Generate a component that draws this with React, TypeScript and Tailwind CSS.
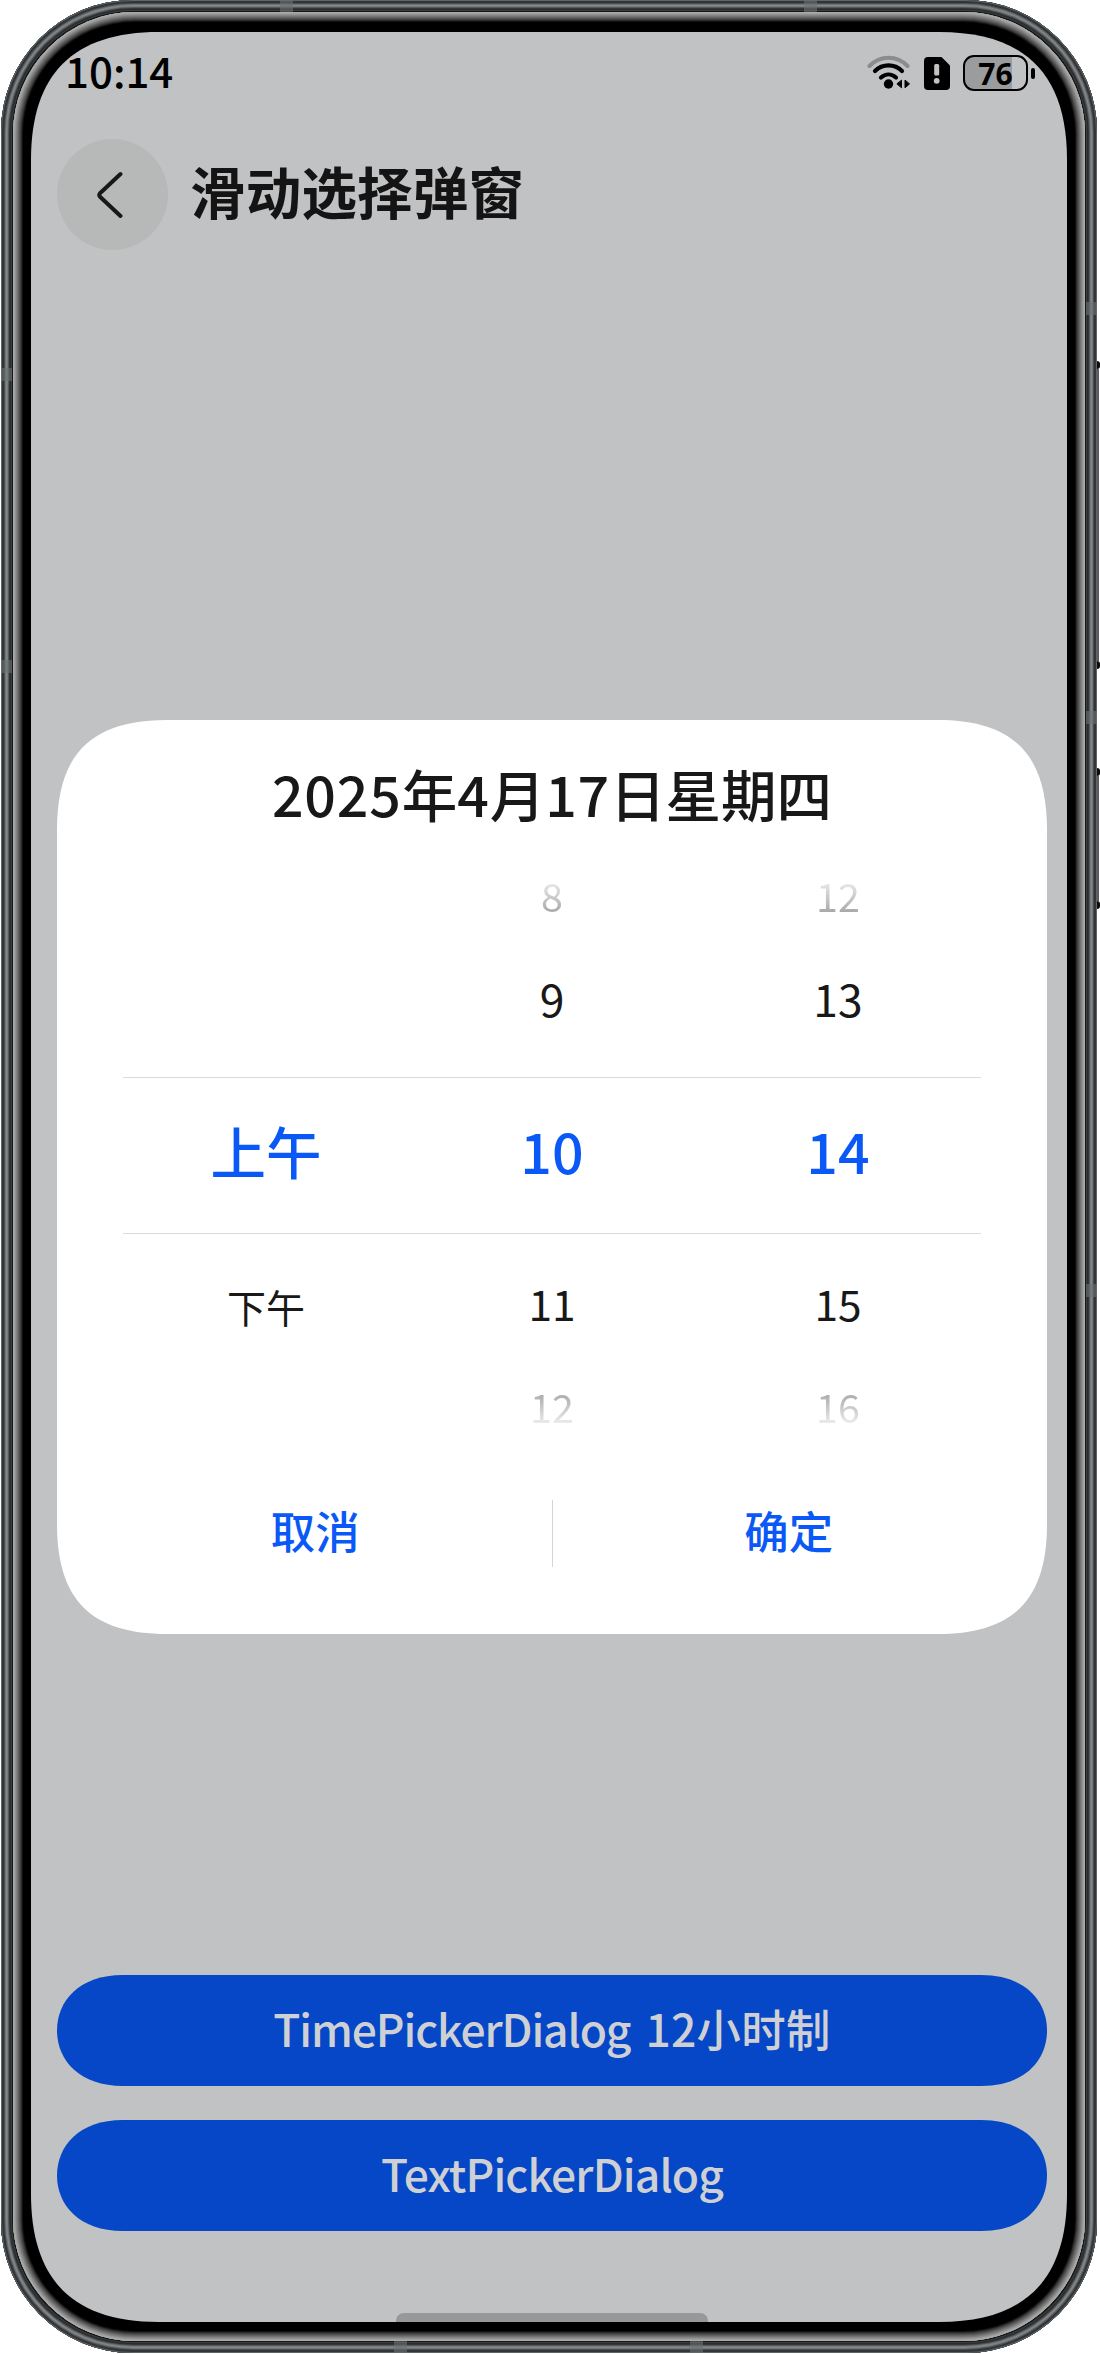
import type { ReactNode } from "react";

type Row = { cells: [string, string, string]; row: string; cell: string };

const rows: Row[] = [
  {
    cells: ["", "8", "12"],
    row: "h-[58px] pt-[1px] text-[39.5px] text-[#181818] [mask-image:linear-gradient(to_bottom,transparent_8px,rgba(0,0,0,0.42)_52px)]",
    cell: "",
  },
  { cells: ["", "9", "13"], row: "h-[154px] pb-[3px] text-[44.4px] text-[#181818]", cell: "" },
  {
    cells: ["上午", "10", "14"],
    row: "h-[157px] border-y border-[#d9dadb] pb-[10px] text-[55.5px] font-medium text-[#0a59f7]",
    cell: "",
  },
  { cells: ["下午", "11", "15"], row: "h-[138px] text-[42.5px] text-[#181818]", cell: "" },
  {
    cells: ["", "12", "16"],
    row: "h-[68px] text-[39.5px] text-[#181818] [mask-image:linear-gradient(to_top,transparent_8px,rgba(0,0,0,0.42)_52px)]",
    cell: "",
  },
];

function WifiIcon() {
  return (
    <svg width="44" height="36" viewBox="0 0 44 36" fill="none" strokeLinecap="round">
      <path d="M2.5 11C13 0 30 0 40.500 11" stroke="#8b8c8d" strokeWidth="4" />
      <path d="M8 16C15.500 8.500 27.500 8.500 35 16" stroke="#000" strokeWidth="4.200" />
      <path d="M14 22.500C18.500 18.500 24.500 18.500 29 22.500" stroke="#000" strokeWidth="4.200" />
      <circle cx="21.500" cy="29" r="4.700" fill="#000" />
      <path
        d="M34.500 25.500V32.800L30.200 29.100ZM38 25.500V32.800L42.300 29.100Z"
        fill="#000"
        stroke="#000"
        strokeWidth="1"
        strokeLinejoin="round"
      />
    </svg>
  );
}

function SimAlertIcon() {
  return (
    <svg width="26" height="33" viewBox="0 0 26 33">
      <path d="M4 0H17.500L26 8.500V29a4 4 0 0 1-4 4H4a4 4 0 0 1-4-4V4a4 4 0 0 1 4-4Z" fill="#000" />
      <rect x="10.200" y="7" width="5" height="11.500" rx="1.500" fill="#c1c2c4" />
      <circle cx="12.700" cy="23.800" r="2.900" fill="#c1c2c4" />
    </svg>
  );
}

function Battery() {
  return (
    <div className="flex items-center gap-[3px]">
      <div className="flex h-[36px] w-[65px] items-center justify-center rounded-[11px] border-[2.500px] border-black bg-[linear-gradient(to_right,#9b9c9d_0_47px,#c1c2c4_47px)]">
        <span className="font-['Noto_Sans'] text-[30px] leading-[31px] font-bold text-black">76</span>
      </div>
      <div className="h-[11px] w-[4px] rounded-full bg-black" />
    </div>
  );
}

function ActionButton({ children }: { children: ReactNode }) {
  return (
    <button className="flex h-[111px] w-full items-center justify-center bg-[#0547c6] pb-[5px] text-[44.4px] leading-none font-medium text-[#ced0d4] [clip-path:path('M0_55.5C0_26_22_0_66_0H924C968_0_990_26_990_55.5S968_111_924_111H66C22_111_0_85_0_55.5Z')]">
      {children}
    </button>
  );
}

function PickerDialog() {
  return (
    <section className="mt-[470px] h-[914px] bg-white [clip-path:path('M0_110C0_34_34_0_110_0H880C956_0_990_34_990_110V804C990_880_956_914_880_914H110C34_914_0_880_0_804Z')]">
      <h2 className="flex h-[145px] items-center justify-center pt-[2px] text-[55.5px] leading-none font-medium text-[#181818]">
        <span className="tracking-[0.800px]">2025</span>年<span className="tracking-[0.800px]">4</span>月
        <span className="tracking-[0.800px]">17</span>日星期四
      </h2>
      <div className="mx-[66px]">
        {rows.map((r, i) => (
          <div key={i} className={`grid grid-cols-3 items-center text-center leading-none ${r.row}`}>
            {r.cells.map((c, j) => (
              <div key={j} className={c === "下午" ? "pt-[6px] text-[39px]" : r.cell}>
                {c}
              </div>
            ))}
          </div>
        ))}
      </div>
      <div className="flex h-[187px] items-center px-[22px] text-[44.4px] leading-none font-medium text-[#0a59f7]">
        <button className="flex-1 pb-[6px]">取消</button>
        <div className="h-[67px] w-px bg-[#d4d5d6]" />
        <button className="flex-1 pb-[6px]">确定</button>
      </div>
    </section>
  );
}

function Screen() {
  return (
    <div className="flex h-[2290px] w-[1036px] flex-col bg-[#c1c2c4] pr-[20px] pl-[26px] [clip-path:path('M0_128C0_42_42_0_128_0H908C994_0_1036_42_1036_128V2162C1036_2248_994_2290_908_2290H128C42_2290_0_2248_0_2162Z')]">
      <header className="-mr-[20px] -ml-[26px] flex h-[107px] items-start justify-between pt-[23px] pr-[32px] pl-[34px]">
        <span className="-mt-[6px] text-[42px] leading-none font-medium text-black">10:14</span>
        <div className="flex items-center gap-[13px]">
          <WifiIcon />
          <SimAlertIcon />
          <Battery />
        </div>
      </header>
      <nav className="flex h-[111px] items-center">
        <button className="flex size-[111px] items-center justify-center rounded-full bg-[#b7b9b8] pr-[6px]">
          <svg width="26" height="48" viewBox="0 0 26 48" fill="none">
            <path
              d="M23.500 3L3 22.200Q1.500 24 3 25.800L23.500 45"
              stroke="#181818"
              strokeWidth="4"
              strokeLinecap="round"
              strokeLinejoin="round"
            />
          </svg>
        </button>
        <h1 className="ml-[22px] pb-[7px] text-[55.5px] leading-none font-bold tracking-[0.200px] text-[#141414]">滑动选择弹窗</h1>
      </nav>
      <PickerDialog />
      <div className="mt-[341px] flex flex-col gap-[34px]">
        <ActionButton>
          <span className="tracking-[-1.100px]">TimePickerDialog</span>
          <span className="ml-[15px] tracking-[0.300px]">12小时制</span>
        </ActionButton>
        <ActionButton>
          <span className="tracking-[-0.850px]">TextPickerDialog</span>
        </ActionButton>
      </div>
      <div className="mt-auto h-[9px] w-[312px] self-center rounded-t-[8px] bg-[#989898]" />
    </div>
  );
}

/* Antenna breaks in the metal rim. */
function AntennaBreaks() {
  return (
    <>
      <i className="absolute top-0 left-[279px] h-[12px] w-[13px] bg-[#6b7172]/60" />
      <i className="absolute top-0 left-[803px] h-[12px] w-[13px] bg-[#6b7172]/60" />
      <i className="absolute bottom-0 left-[393px] h-[12px] w-[13px] bg-[#6b7172]/60" />
      <i className="absolute bottom-0 left-[689px] h-[12px] w-[13px] bg-[#6b7172]/60" />
      <i className="absolute top-[368px] left-0 h-[13px] w-[11px] bg-[#6b7172]/60" />
      <i className="absolute top-[660px] left-0 h-[13px] w-[11px] bg-[#6b7172]/60" />
      <i className="absolute top-[302px] right-0 h-[13px] w-[11px] bg-[#6b7172]/60" />
      <i className="absolute top-[711px] right-0 h-[13px] w-[11px] bg-[#6b7172]/60" />
      <i className="absolute top-[1284px] right-0 h-[13px] w-[11px] bg-[#6b7172]/60" />
    </>
  );
}

/* A side key: a thin strip with a darker cap at either end. */
function SideKey({ className }: { className: string }) {
  return (
    <div className={`flex flex-col justify-between ${className}`}>
      <div className="h-[8px] w-[3px] rounded-r-[3px] bg-[#0c0c0c]" />
      <div className="w-[2px] flex-1 bg-[#5a5c5e]" />
      <div className="h-[8px] w-[3px] rounded-r-[3px] bg-[#0c0c0c]" />
    </div>
  );
}

export default function App() {
  return (
    <div className="flex h-[2354px] w-[1100px] items-start overflow-hidden bg-white font-['Noto_Sans_CJK_SC',sans-serif]">
      <div className="relative ml-px h-[2353px] w-[1096px] shrink-0 rounded-[132px] bg-[#1c1e20] p-[12px] shadow-[inset_0_0_0_1px_#5f6567,inset_0_0_0_2px_#33373a,inset_0_0_0_3px_#303437,inset_0_0_0_4px_#4c5053,inset_0_0_0_5px_#6f7274,inset_0_0_0_6px_#86888a,inset_0_0_0_7px_#77797b,inset_0_0_0_8px_#55585a,inset_0_0_0_9px_#34373a,inset_0_0_0_10px_#292c2f,inset_0_0_0_11px_#3b3e40,inset_0_0_0_12px_#151617]">
        <AntennaBreaks />
        <div className="rounded-[122px] bg-black px-[18px] pt-[20px] pb-[19px] shadow-[inset_0_0_0_1px_#aaaaa8,inset_0_0_0_2px_#a0a09f,inset_0_0_0_3px_#929292,inset_0_0_0_4px_#838383,inset_0_0_0_5px_#737373,inset_0_0_0_6px_#636363,inset_0_0_0_7px_#525252,inset_0_0_0_8px_#404040,inset_0_0_0_9px_#2b2b2b,inset_0_0_0_10px_#101010]">
          <Screen />
        </div>
      </div>
      <div className="flex w-[3px] flex-col pt-[361px]">
        <SideKey className="h-[308px]" />
        <SideKey className="mt-[99px] h-[141px]" />
      </div>
    </div>
  );
}
